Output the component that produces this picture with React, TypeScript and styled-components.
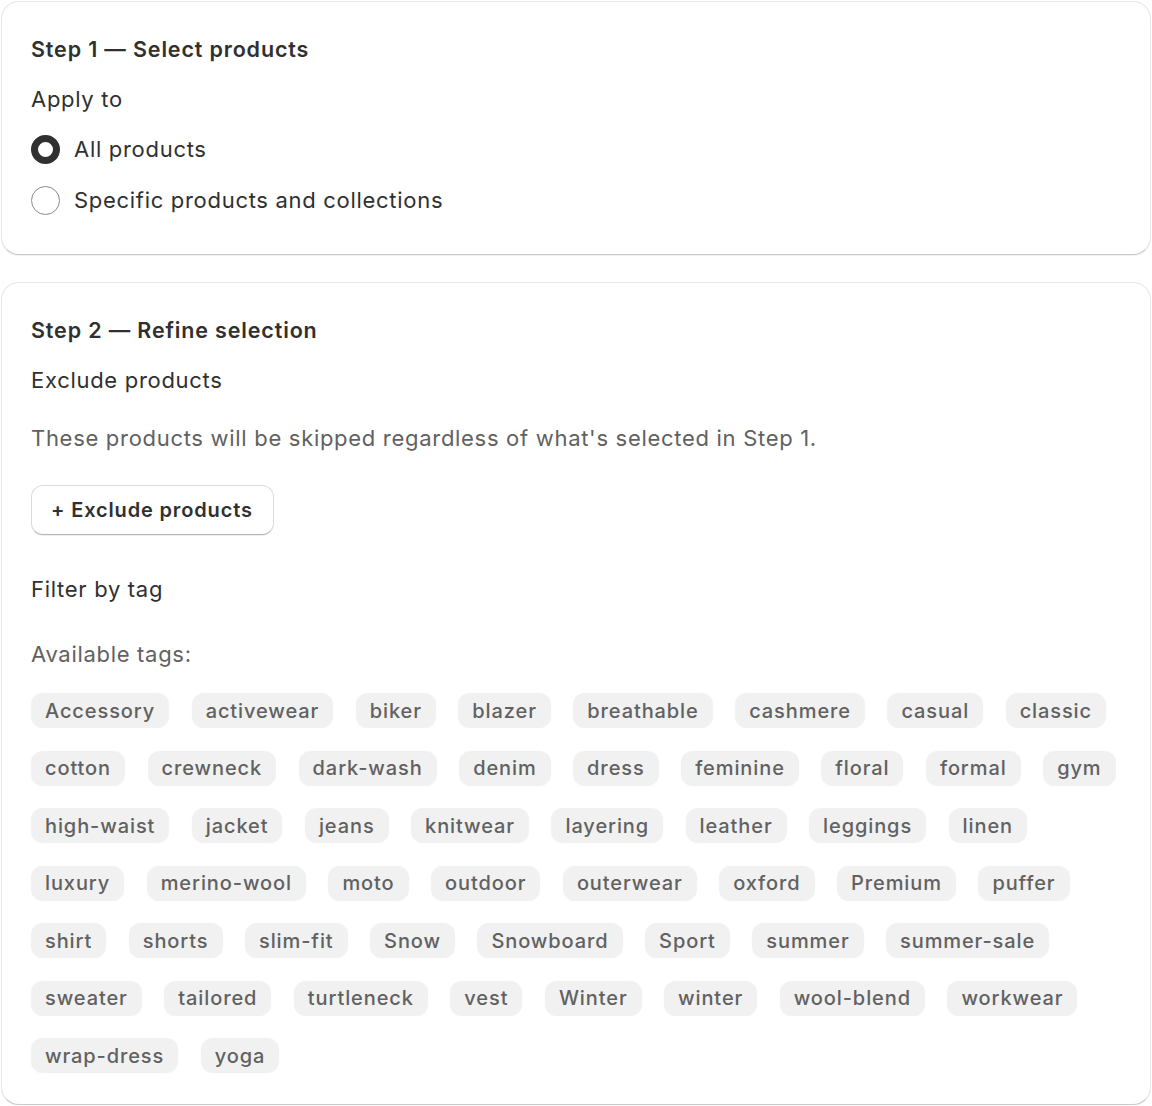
import styled, { createGlobalStyle } from 'styled-components';

const GlobalStyle = createGlobalStyle`
  * {
    box-sizing: border-box;
  }

  body {
    margin: 0;
    background: #ffffff;
    font-family: Inter, "Noto Sans", sans-serif;
    color: #303030;
    -webkit-font-smoothing: antialiased;
  }
`;

const tags = [
  'Accessory', 'activewear', 'biker', 'blazer', 'breathable', 'cashmere', 'casual', 'classic',
  'cotton', 'crewneck', 'dark-wash', 'denim', 'dress', 'feminine', 'floral', 'formal', 'gym',
  'high-waist', 'jacket', 'jeans', 'knitwear', 'layering', 'leather', 'leggings', 'linen',
  'luxury', 'merino-wool', 'moto', 'outdoor', 'outerwear', 'oxford', 'Premium', 'puffer',
  'shirt', 'shorts', 'slim-fit', 'Snow', 'Snowboard', 'Sport', 'summer', 'summer-sale',
  'sweater', 'tailored', 'turtleneck', 'vest', 'Winter', 'winter', 'wool-blend', 'workwear',
  'wrap-dress', 'yoga',
];

const Page = styled.div`
  padding: 1px 1px 0;
  display: flex;
  flex-direction: column;
  gap: 27px;
`;

const Card = styled.section`
  background: #ffffff;
  border: 1px solid #e6e6e6;
  border-bottom-color: #c8c8c8;
  border-radius: 18px;
  box-shadow: 0 1px 0 rgba(0, 0, 0, 0.05);
  padding: 29px 29px 39px;
  display: flex;
  flex-direction: column;

  &.tags {
    padding-bottom: 31px;
  }
`;

const Heading = styled.h2`
  margin: 0;
  font-size: 21.5px;
  line-height: 36px;
  font-weight: 600;
  letter-spacing: 0.85px;
  color: #303030;
`;

const Label = styled.div<{ $top: number }>`
  margin-top: ${(p) => p.$top}px;
  font-size: 22px;
  line-height: 30px;
  letter-spacing: 0.7px;
  color: #303030;
`;

const Subdued = styled.p<{ $top: number }>`
  margin: ${(p) => p.$top}px 0 0;
  font-size: 22px;
  line-height: 30px;
  letter-spacing: 0.7px;
  color: #616161;
`;

const RadioList = styled.div`
  margin-top: 20px;
  display: flex;
  flex-direction: column;
  gap: 21px;
`;

const RadioRow = styled.label`
  display: flex;
  align-items: center;
  gap: 14px;
  height: 30px;
  font-size: 22px;
  letter-spacing: 0.7px;
  color: #303030;
  cursor: pointer;
`;

const RadioDot = styled.span<{ $checked?: boolean }>`
  width: 29px;
  height: 29px;
  border-radius: 50%;
  background: #ffffff;
  border: ${(p) => (p.$checked ? '7.5px solid #303030' : '1px solid #8a8a8a')};
  flex-shrink: 0;
`;

const ActionButton = styled.button`
  margin-top: 32px;
  align-self: flex-start;
  height: 50px;
  padding: 0 20px 0 19px;
  background: #ffffff;
  border: 1px solid #dcdcdc;
  border-bottom-color: #b5b5b5;
  border-radius: 12px;
  box-shadow: 0 1px 0 rgba(0, 0, 0, 0.06);
  font-family: inherit;
  font-size: 20px;
  font-weight: 600;
  letter-spacing: 0.85px;
  color: #303030;
  cursor: pointer;
`;

const TagList = styled.div`
  margin-top: 24px;
  display: flex;
  flex-wrap: wrap;
  column-gap: 22.5px;
  row-gap: 22.5px;
`;

const Tag = styled.span`
  display: inline-flex;
  align-items: center;
  height: 35px;
  padding: 0 14px;
  background: #f1f1f1;
  border-radius: 12px;
  box-shadow: 0 0 2px rgba(0, 0, 0, 0.04);
  font-size: 20px;
  font-weight: 500;
  letter-spacing: 0.9px;
  color: #616161;
`;

export default function App() {
  return (
    <>
      <GlobalStyle />
      <Page>
        <Card>
          <Heading>Step 1 — Select products</Heading>
          <Label $top={17}>Apply to</Label>
          <RadioList>
            <RadioRow>
              <RadioDot $checked />
              All products
            </RadioRow>
            <RadioRow>
              <RadioDot />
              Specific products and collections
            </RadioRow>
          </RadioList>
        </Card>

        <Card className="tags">
          <Heading>Step 2 — Refine selection</Heading>
          <Label $top={17}>Exclude products</Label>
          <Subdued $top={28}>
            These products will be skipped regardless of what's selected in Step 1.
          </Subdued>
          <ActionButton type="button">+ Exclude products</ActionButton>
          <Label $top={39}>Filter by tag</Label>
          <Subdued $top={35}>Available tags:</Subdued>
          <TagList>
            {tags.map((tag) => (
              <Tag key={tag}>{tag}</Tag>
            ))}
          </TagList>
        </Card>
      </Page>
    </>
  );
}
